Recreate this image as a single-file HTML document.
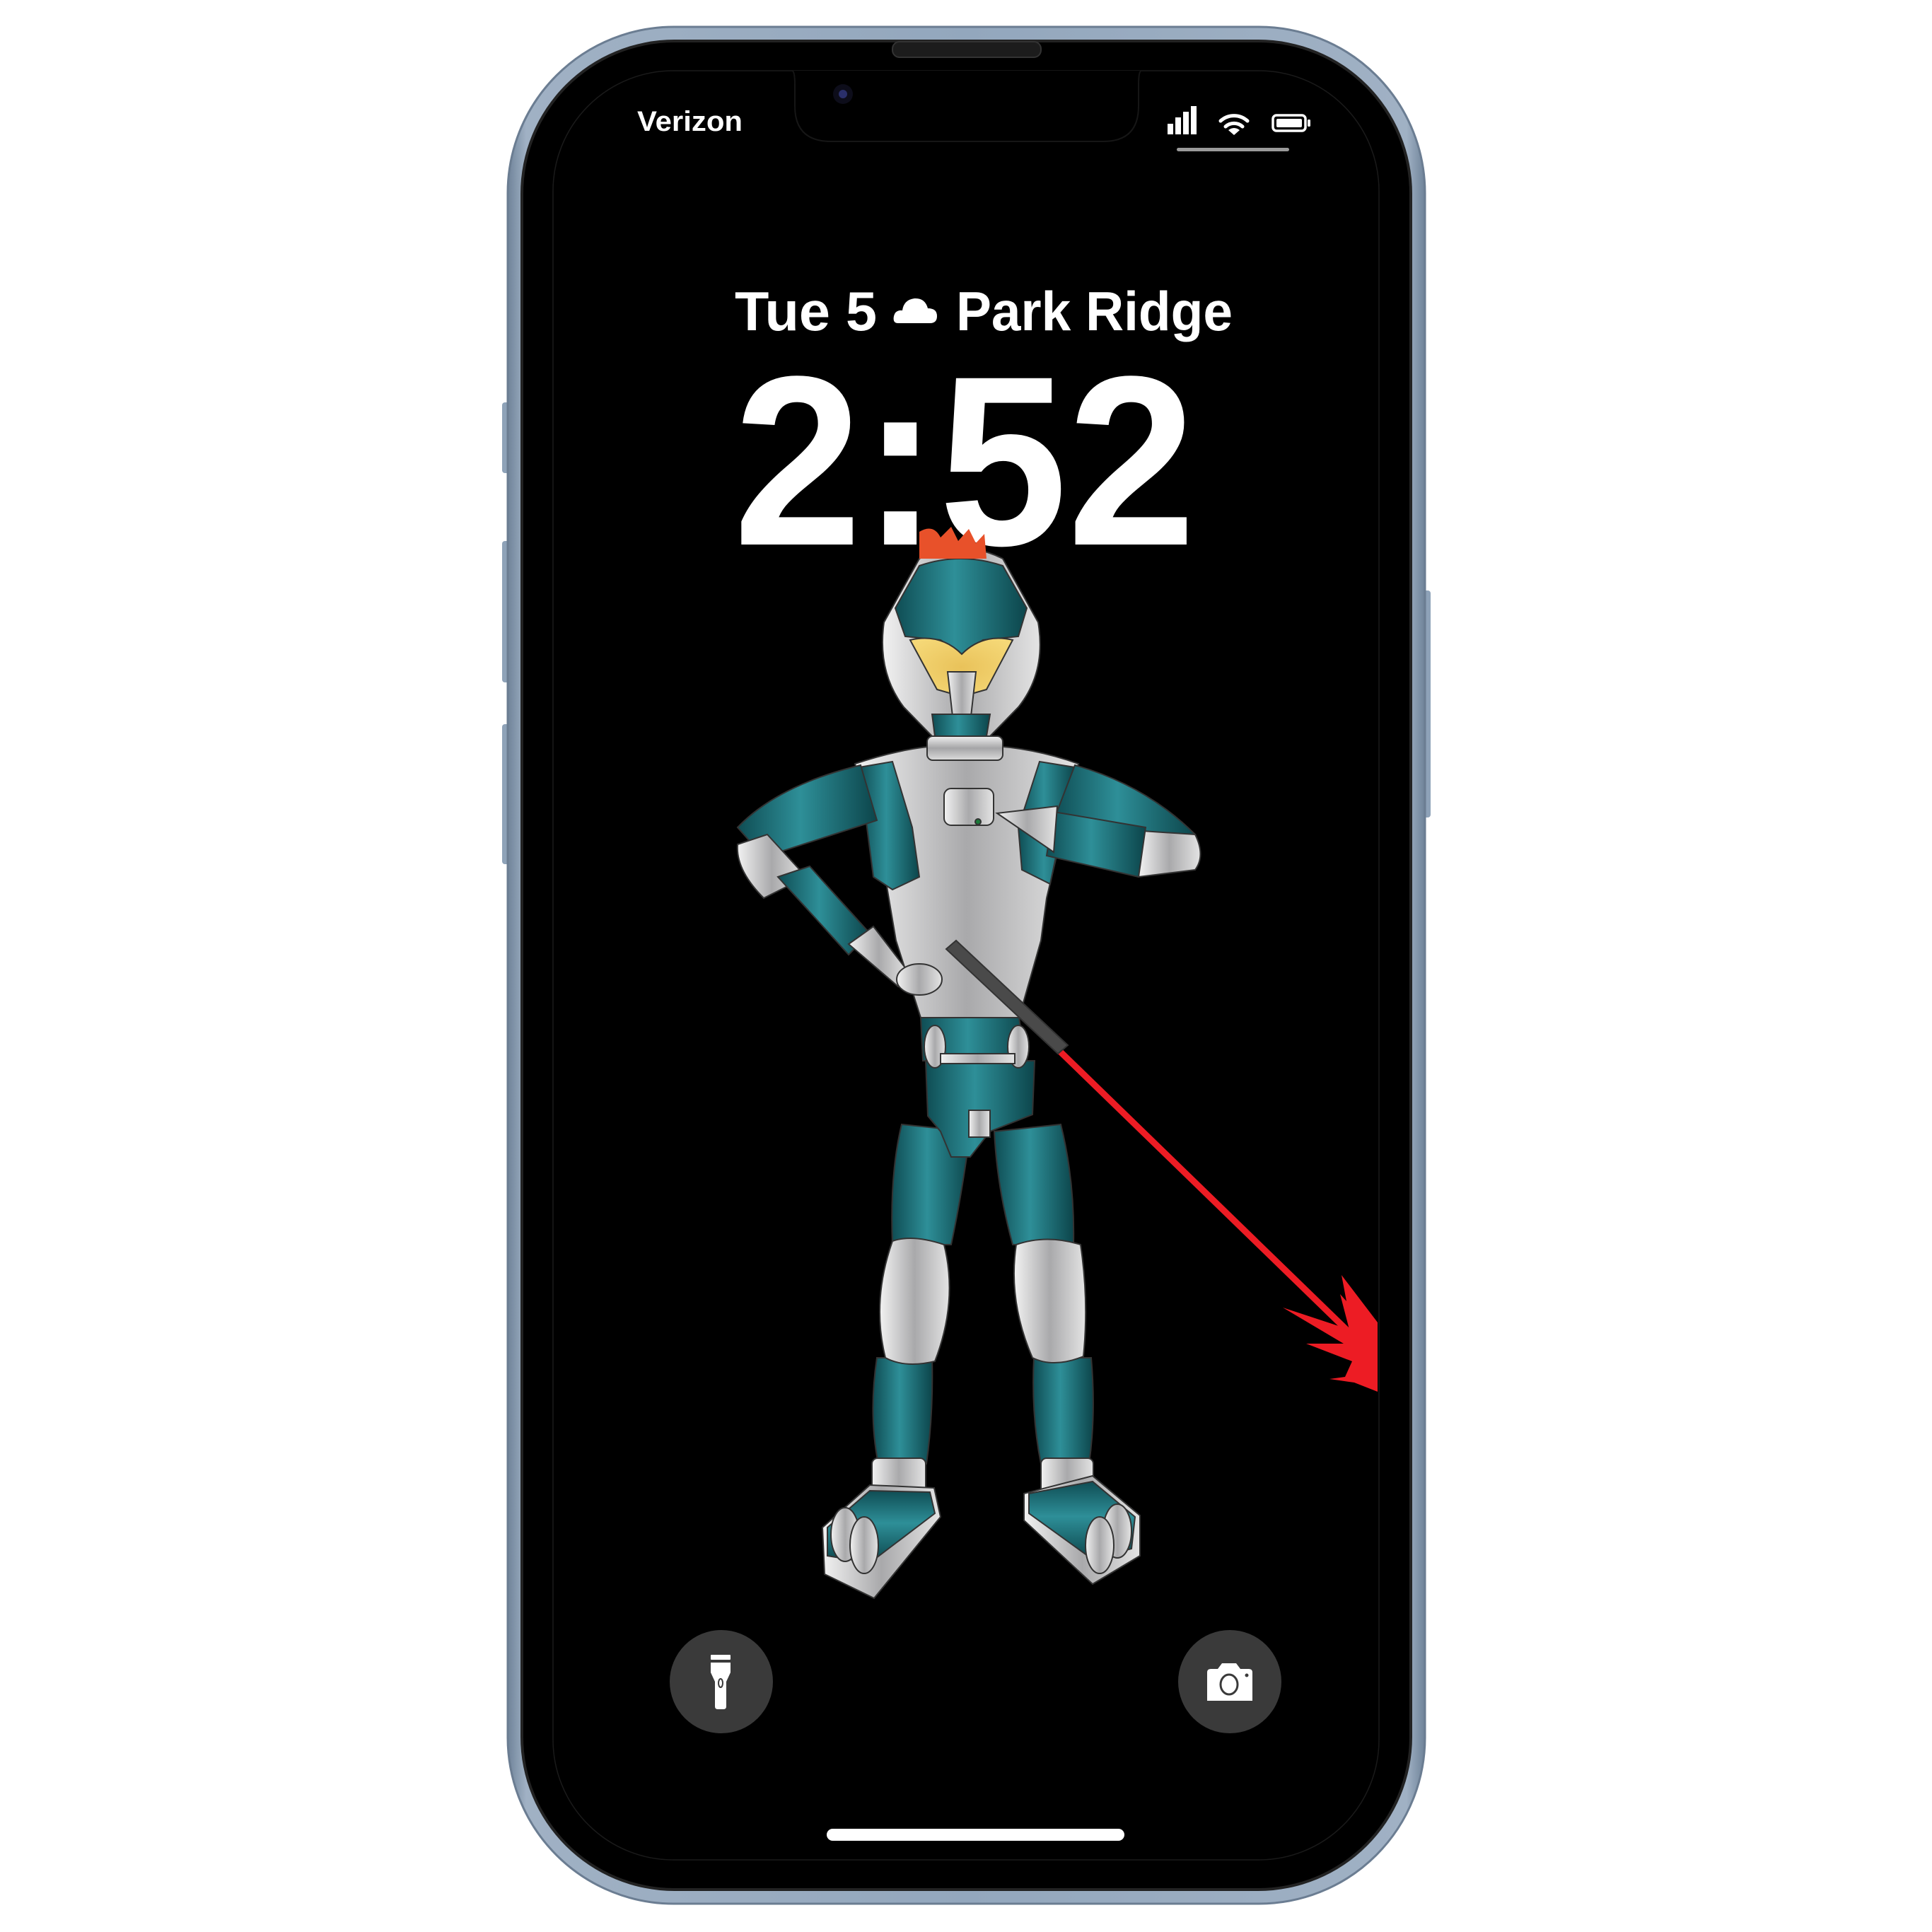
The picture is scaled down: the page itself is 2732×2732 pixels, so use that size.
<!DOCTYPE html>
<html><head><meta charset="utf-8"><style>html,body{margin:0;padding:0;background:#fff;width:2732px;height:2732px;overflow:hidden}svg{display:block}</style></head>
<body>
<svg width="2732" height="2732" viewBox="0 0 2732 2732" xmlns="http://www.w3.org/2000/svg">
<defs>
<linearGradient id="frame" x1="0" x2="1" y1="0" y2="0">
<stop offset="0" stop-color="#6f8399"/><stop offset=".02" stop-color="#a0b1c4"/><stop offset=".5" stop-color="#93a7bd"/><stop offset=".98" stop-color="#a0b1c4"/><stop offset="1" stop-color="#6f8399"/></linearGradient>
<linearGradient id="teal" x1="0" x2="1" y1="0" y2="0">
<stop offset="0" stop-color="#0f4d54"/><stop offset=".45" stop-color="#2e8f98"/><stop offset="1" stop-color="#0c454b"/></linearGradient>
<linearGradient id="tealv" x1="0" x2="0" y1="0" y2="1">
<stop offset="0" stop-color="#0f4d54"/><stop offset=".45" stop-color="#2e8f98"/><stop offset="1" stop-color="#0c454b"/></linearGradient>
<linearGradient id="silver" x1="0" x2="1" y1="0" y2="0">
<stop offset="0" stop-color="#f2f2f2"/><stop offset=".5" stop-color="#a9a9ab"/><stop offset="1" stop-color="#e4e4e4"/></linearGradient>
<linearGradient id="silverv" x1="0" x2="0" y1="0" y2="1">
<stop offset="0" stop-color="#f0f0f0"/><stop offset=".5" stop-color="#a5a5a7"/><stop offset="1" stop-color="#dcdcdc"/></linearGradient>
<radialGradient id="visor" cx=".5" cy=".5" r=".6"><stop offset="0" stop-color="#e9c25a"/><stop offset="1" stop-color="#f5d877"/></radialGradient>
</defs>

<rect x="710" y="569" width="14" height="100" rx="4" fill="#8ea2b8"/>
<rect x="710" y="765" width="14" height="200" rx="4" fill="#8ea2b8"/>
<rect x="710" y="1024" width="14" height="198" rx="4" fill="#8ea2b8"/>
<rect x="2009" y="835" width="14" height="321" rx="4" fill="#8ea2b8"/>

<rect x="718" y="38" width="1297" height="2654" rx="235" fill="url(#frame)" stroke="#6b7d92" stroke-width="3"/>
<rect x="736" y="56" width="1261" height="2618" rx="218" fill="#222"/>
<rect x="740" y="60" width="1253" height="2610" rx="214" fill="#000"/>
<rect x="782" y="100" width="1168" height="2530" rx="170" fill="none" stroke="#1a1a1a" stroke-width="1.5"/>
<rect x="1262" y="59" width="210" height="22" rx="10" fill="#1c1c1c" stroke="#333" stroke-width="2"/>
<path d="M1120 100 Q1124 100 1124 120 L1124 150 Q1124 200 1175 200 L1560 200 Q1610 200 1610 150 L1610 120 Q1610 100 1614 100" fill="#000" stroke="#161616" stroke-width="2"/>
<circle cx="1192" cy="133" r="14" fill="#0d0d1a"/><circle cx="1192" cy="133" r="6" fill="#2a2f6a"/>

<text x="901" y="185" font-family="Liberation Sans, sans-serif" font-weight="bold" font-size="40" fill="#fff" textLength="149" lengthAdjust="spacingAndGlyphs">Verizon</text>
<rect x="1651" y="175" width="8" height="15" fill="#fff"/>
<rect x="1662" y="166" width="8" height="24" fill="#fff"/>
<rect x="1673" y="158" width="8" height="32" fill="#fff"/>
<rect x="1684" y="150" width="8" height="40" fill="#fff"/>
<g fill="none" stroke="#fff" stroke-width="5" stroke-linecap="round">
<path d="M1726 171 A28 28 0 0 1 1764 171"/>
<path d="M1733 179 A18 18 0 0 1 1757 179"/>
</g>
<path d="M1737 184 L1745 191 L1753 184 Q1745 178 1737 184Z" fill="#fff"/>
<rect x="1800" y="163" width="46" height="22" rx="5" fill="none" stroke="#fff" stroke-width="3.5"/>
<rect x="1805" y="168" width="36" height="12" rx="2" fill="#fff"/>
<rect x="1849" y="169" width="4" height="10" rx="1.5" fill="#fff"/>
<rect x="1664" y="209" width="159" height="5" rx="2.5" fill="#9a9a9a"/>

<text x="1039" y="467" font-family="Liberation Sans, sans-serif" font-weight="bold" font-size="78" fill="#fff" textLength="201" lengthAdjust="spacingAndGlyphs">Tue 5</text>
<path d="M1270 457 Q1262 457 1264 447 Q1266 438 1276 439 Q1278 424 1293 422 Q1308 421 1312 436 Q1325 436 1325 447 Q1325 457 1315 457Z" fill="#fff"/>
<text x="1352" y="467" font-family="Liberation Sans, sans-serif" font-weight="bold" font-size="78" fill="#fff" textLength="391" lengthAdjust="spacingAndGlyphs">Park Ridge</text>

<text x="1037" y="770" font-family="Liberation Sans, sans-serif" font-weight="bold" font-size="342" fill="#fff" textLength="654" lengthAdjust="spacingAndGlyphs">2:52</text>

<g stroke="#333" stroke-width="2">
<line x1="1495" y1="1483" x2="1912" y2="1888" stroke="#ed1c24" stroke-width="9"/>
<path d="M1948 1870 L1897 1803 L1904 1840 L1895 1830 L1908 1880 L1814 1849 L1900 1900 L1847 1900 L1912 1925 L1902 1947 L1880 1950 L1915 1955 L1948 1968Z" fill="#ed1c24" stroke="none"/>

<path d="M1275 1590 L1372 1600 Q1360 1690 1345 1760 L1262 1760 Q1258 1660 1275 1590Z" fill="url(#teal)"/>
<path d="M1406 1600 L1500 1590 Q1520 1670 1518 1760 L1432 1760 Q1410 1680 1406 1600Z" fill="url(#teal)"/>
<path d="M1240 1920 L1318 1920 Q1320 2000 1310 2070 L1242 2070 Q1228 2000 1240 1920Z" fill="url(#teal)"/>
<path d="M1462 1920 L1543 1920 Q1550 2000 1540 2070 L1472 2070 Q1458 2000 1462 1920Z" fill="url(#teal)"/>
<path d="M1262 1755 Q1290 1745 1335 1760 Q1355 1840 1322 1925 Q1280 1935 1252 1920 Q1232 1840 1262 1755Z" fill="url(#silver)"/>
<path d="M1437 1760 Q1480 1745 1528 1760 Q1540 1840 1532 1918 Q1490 1935 1460 1920 Q1425 1840 1437 1760Z" fill="url(#silver)"/>
<rect x="1233" y="2062" width="76" height="52" rx="8" fill="url(#silver)"/>
<rect x="1472" y="2062" width="74" height="52" rx="8" fill="url(#silver)"/>
<path d="M1163 2160 L1230 2100 L1321 2104 L1330 2145 L1236 2260 L1166 2226Z" fill="url(#silver)"/>
<path d="M1170 2160 L1230 2108 L1315 2110 L1322 2140 L1230 2210 L1170 2200Z" fill="url(#tealv)"/>
<ellipse cx="1195" cy="2170" rx="20" ry="38" fill="url(#silver)"/>
<ellipse cx="1222" cy="2185" rx="20" ry="40" fill="url(#silver)"/>
<path d="M1448 2112 L1545 2087 L1612 2143 L1612 2200 L1545 2240 L1448 2150Z" fill="url(#silver)"/>
<path d="M1455 2112 L1545 2095 L1605 2145 L1600 2190 L1545 2205 L1455 2140Z" fill="url(#tealv)"/>
<ellipse cx="1580" cy="2165" rx="20" ry="38" fill="url(#silver)"/>
<ellipse cx="1555" cy="2185" rx="20" ry="40" fill="url(#silver)"/>

<path d="M1309 1500 L1463 1500 L1460 1576 L1400 1600 L1372 1636 L1345 1636 L1330 1600 L1312 1578Z" fill="url(#teal)"/>
<rect x="1370" y="1570" width="30" height="38" fill="url(#silver)"/>
<path d="M1302 1439 L1441 1439 L1450 1500 L1305 1500Z" fill="url(#teal)"/>
<ellipse cx="1322" cy="1480" rx="15" ry="30" fill="url(#silver)"/>
<ellipse cx="1440" cy="1480" rx="15" ry="30" fill="url(#silver)"/>
<rect x="1330" y="1490" width="105" height="14" fill="url(#silver)"/>

<path d="M1209 1080 Q1300 1050 1360 1055 Q1440 1050 1525 1080 L1480 1270 L1472 1330 L1441 1439 L1302 1439 L1267 1330 L1250 1230Z" fill="url(#silver)"/>
<path d="M1215 1085 L1262 1077 L1290 1170 L1300 1240 L1262 1258 L1235 1240Z" fill="url(#teal)"/>
<path d="M1520 1085 L1470 1077 L1440 1170 L1445 1230 L1485 1250Z" fill="url(#teal)"/>
<rect x="1311" y="1041" width="107" height="34" rx="8" fill="url(#silverv)"/>

<path d="M1217 1082 L1240 1160 L1080 1212 L1043 1170 Q1100 1110 1217 1082Z" fill="url(#teal)"/>
<path d="M1043 1194 L1085 1180 L1140 1240 L1080 1270 Q1040 1230 1043 1194Z" fill="url(#silver)"/>
<path d="M1100 1240 L1145 1225 L1230 1320 L1200 1350 Z" fill="url(#teal)"/>
<path d="M1200 1335 L1235 1310 L1285 1375 L1270 1395Z" fill="url(#silver)"/>
<ellipse cx="1300" cy="1385" rx="32" ry="22" fill="url(#silver)"/>

<path d="M1520 1082 Q1620 1110 1690 1180 L1620 1200 L1490 1160Z" fill="url(#teal)"/>
<path d="M1615 1175 L1690 1180 Q1705 1210 1690 1230 L1610 1240Z" fill="url(#silver)"/>
<path d="M1490 1148 L1620 1170 L1610 1240 L1480 1210Z" fill="url(#teal)"/>
<path d="M1410 1150 L1495 1140 L1490 1205 Z" fill="url(#silver)"/>
<rect x="1335" y="1115" width="70" height="52" rx="10" fill="url(#silver)"/>
<circle cx="1383" cy="1162" r="4" fill="#1a7a3a"/>

<path d="M1338 1342 L1352 1330 L1510 1478 L1496 1490Z" fill="#4a4a4a"/>

<path d="M1300 790 Q1358 760 1418 790 L1468 880 Q1480 950 1440 1000 L1400 1041 L1318 1041 L1278 1000 Q1240 950 1250 880Z" fill="url(#silver)"/>
<path d="M1300 800 Q1358 780 1418 800 L1452 860 L1440 900 L1390 905 L1360 925 L1330 905 L1280 900 L1266 860Z" fill="url(#teal)"/>
<path d="M1287 905 Q1330 895 1360 925 Q1390 895 1432 905 L1395 975 L1360 985 L1325 975Z" fill="url(#visor)"/>
<path d="M1340 950 L1380 950 L1370 1040 L1350 1040Z" fill="url(#silver)"/>
<path d="M1318 1010 L1400 1010 L1395 1041 L1322 1041Z" fill="url(#teal)"/>
<path d="M1300 752 Q1320 740 1330 760 L1345 745 L1355 765 L1370 748 L1380 768 L1392 755 L1395 790 L1300 790Z" fill="#e8512a" stroke="none"/>
</g>

<circle cx="1020" cy="2378" r="73" fill="#3a3a3a"/>
<rect x="1005" y="2340" width="28" height="7" rx="1" fill="#fff"/>
<path d="M1005 2351 L1033 2351 L1033 2365 L1027 2378 L1027 2413 Q1027 2417 1023 2417 L1015 2417 Q1011 2417 1011 2413 L1011 2378 L1005 2365Z" fill="#fff"/>
<ellipse cx="1019" cy="2380" rx="3" ry="6" fill="none" stroke="#3a3a3a" stroke-width="2"/>
<circle cx="1739" cy="2378" r="73" fill="#3a3a3a"/>
<path d="M1707 2365 Q1707 2360 1712 2360 L1722 2360 L1728 2352 L1748 2352 L1754 2360 L1766 2360 Q1771 2360 1771 2365 L1771 2405 L1707 2405Z" fill="#fff"/>
<ellipse cx="1738" cy="2382" rx="12" ry="14" fill="none" stroke="#3a3a3a" stroke-width="3"/>
<circle cx="1763" cy="2369" r="2.5" fill="#3a3a3a"/>

<rect x="1169" y="2586" width="421" height="17" rx="8.5" fill="#fff"/>
</svg>
</body></html>
